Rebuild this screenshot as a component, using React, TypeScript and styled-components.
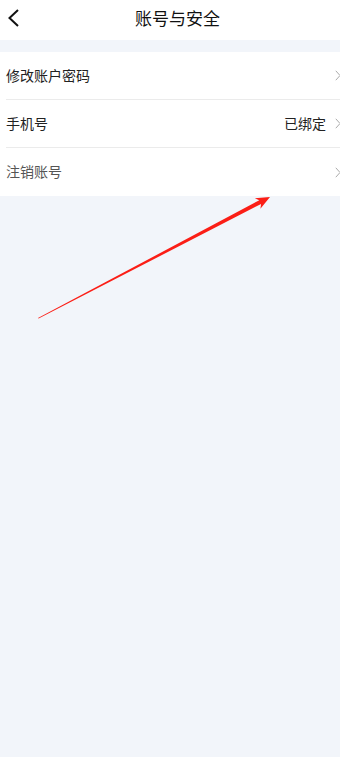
import React from "react";
import styled, { createGlobalStyle } from "styled-components";

const Global = createGlobalStyle`
  html, body { margin: 0; padding: 0; background: #f2f5fa; }
  body { font-family: "Noto Sans CJK SC", "Noto Sans", sans-serif; }
  #root { min-height: 757px; }
`;

const Page = styled.div`
  position: relative;
  width: 340px;
  min-height: 757px;
  background: #f2f5fa;
  overflow: hidden;
`;

const Header = styled.header`
  height: 40px;
  background: #ffffff;
  display: grid;
  grid-template-columns: 40px 1fr 40px;
  align-items: center;
`;

const BackButton = styled.div`
  display: flex;
  align-items: center;
  padding-left: 7px;
  padding-bottom: 4px;
  height: 36px;
`;

const Title = styled.h1`
  margin: 0;
  text-align: center;
  font-size: 17px;
  font-weight: 400;
  color: #111;
  line-height: 40px;
  padding-left: 15px;
  transform: translateY(-2px);
`;

const Spacer = styled.div`
  height: 12px;
`;

const List = styled.div`
  background: #fff;
  padding-left: 6px;
`;

const Row = styled.div<{ $last?: boolean }>`
  height: ${(p) => (p.$last ? "48px" : "47px")};
  display: flex;
  align-items: center;
  border-bottom: ${(p) => (p.$last ? "none" : "1px solid #ebebeb")};
`;

const Label = styled.span<{ $muted?: boolean }>`
  flex: 1;
  font-size: 14px;
  color: ${(p) => (p.$muted ? "#555" : "#222")};
  line-height: 1;
  transform: translateY(-1px);
`;

const Value = styled.span`
  font-size: 14px;
  color: #222;
  margin-right: 9px;
  line-height: 1;
  transform: translateY(-1px);
`;

const Chevron = styled.svg`
  width: 6px;
  height: 11px;
  margin-right: -1px;
  flex: none;
`;

const Arrow = styled.svg`
  position: absolute;
  left: 0;
  top: 0;
  pointer-events: none;
`;

const ChevronIcon = () => (
  <Chevron viewBox="0 0 6 11">
    <path d="M0.8 0.8 L5 5.5 L0.8 10.2" fill="none" stroke="#aaa" strokeWidth="1" />
  </Chevron>
);

export default function App() {
  return (
    <>
      <Global />
      <Page>
        <Header>
          <BackButton>
            <svg width="13" height="18" viewBox="0 0 13 18">
              <path d="M11 1 L2.5 9 L11 17" fill="none" stroke="#111" strokeWidth="2" />
            </svg>
          </BackButton>
          <Title>账号与安全</Title>
          <div />
        </Header>
        <Spacer />
        <List>
          <Row>
            <Label>修改账户密码</Label>
            <ChevronIcon />
          </Row>
          <Row>
            <Label>手机号</Label>
            <Value>已绑定</Value>
            <ChevronIcon />
          </Row>
          <Row $last>
            <Label $muted>注销账号</Label>
            <ChevronIcon />
          </Row>
        </List>
        <Arrow width="340" height="757" viewBox="0 0 340 757">
          <polygon
            points="38,318 259.3,200.3 254.8,198.2 270,197 260.4,208.8 261.1,203.9 38.6,318.6"
            fill="#fb1e16"
          />
        </Arrow>
      </Page>
    </>
  );
}
